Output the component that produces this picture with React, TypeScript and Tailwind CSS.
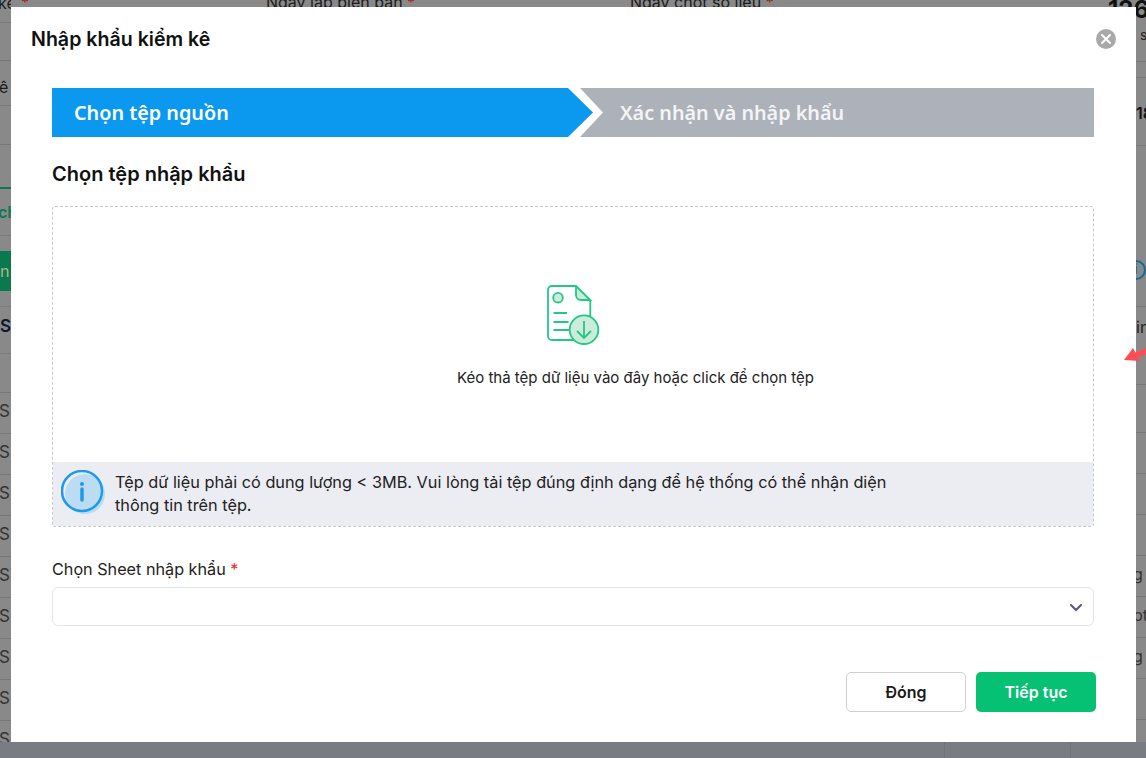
import React from "react";

const codeRows = ["SP", "SP", "SP", "SP", "ST", "SN", "SN", "SN", "SG"];
const rightRows = ["", "", "", "g", "pt", "g", "", ""];

const Backdrop: React.FC = () => (
  <div className="flex h-[742px] justify-between overflow-hidden text-[16px] text-[#1b1b1b]">
    <div className="flex w-[11px] flex-col overflow-hidden whitespace-nowrap">
      <div className="h-[23px] shrink-0 border-b border-[#777] leading-[6px] -ml-[2px]">ke</div>
      <div className="h-[38px] shrink-0 border-b border-[#777]" />
      <div className="flex h-[45px] shrink-0 items-center border-b border-[#777] pt-[8px] -ml-[1px]">ê</div>
      <div className="h-[39px] shrink-0 border-b border-[#777]" />
      <div className="h-[44px] shrink-0 border-b-2 border-[#0a7a4e]" />
      <div className="flex h-[47px] shrink-0 items-center border-b border-[#7c7c7c] font-semibold text-[#0a7a4e]">
        <span className="-ml-[2px]">ch</span>
      </div>
      <div className="h-[15px] shrink-0" />
      <div className="flex h-[40px] shrink-0 items-center bg-[#0a7a4e] text-[#b9b38a]">n</div>
      <div className="h-[16px] shrink-0 border-b border-[#7c7c7c]" />
      <div className="flex h-[47px] shrink-0 items-center border-b border-[#7c7c7c] pb-[6px] text-[17px] font-semibold text-[#0d1830]">
        Se
      </div>
      <div className="h-[39px] shrink-0 border-b border-[#777]" />
      {codeRows.map((code, i) => (
        <div key={i} className="flex h-[41px] shrink-0 items-center border-b border-[#777] pb-[3px] text-[17px] text-[#333] -ml-[1px]">
          {code}
        </div>
      ))}
    </div>
    <div className="flex w-[10px] flex-col overflow-hidden whitespace-nowrap">
      <div className="flex h-[62px] shrink-0 items-center border-b border-[#777] pt-[8px] text-[14px] text-[#222] pl-[4px]">s</div>
      <div className="h-[16px] shrink-0 border-b border-[#777]" />
      <div className="flex h-[68px] shrink-0 items-center border-b border-[#777] pt-[2px] font-semibold text-[#111]">18</div>
      <div className="flex h-[161px] shrink-0 items-center border-b border-[#777] pt-[88px]">
        <div className="flex h-[20px] w-[20px] shrink-0 -ml-[10px] items-center justify-center rounded-full border-2 border-[#13689c] text-[13px] text-[#13689c]">
          i
        </div>
      </div>
      <div className="flex h-[78px] shrink-0 items-center border-b border-[#777] pb-[38px] text-[#222]">in</div>
      <div className="h-[48px] shrink-0 border-b border-[#777]" />
      {rightRows.map((text, i) => (
        <div key={i} className="flex h-[41px] shrink-0 items-center border-b border-[#777] pb-[5px] text-[#333] -ml-[3px]">
          {text}
        </div>
      ))}
    </div>
  </div>
);

const FileIcon: React.FC = () => (
  <svg width="54" height="60" viewBox="0 0 54 60" fill="none" stroke="#22c983" strokeWidth="1.800">
    <path d="M29 1H5a4 4 0 0 0-4 4v46a4 4 0 0 0 4 4h25" />
    <path d="M43.300 15v16" />
    <path d="M29 1l14.300 14H34a5 5 0 0 1-5-5z" fill="#cdebdb" />
    <circle cx="11" cy="12.700" r="4.800" fill="#cdebdb" />
    <path d="M6.500 28h13.500M6.500 37h15M6.500 45h17" />
    <circle cx="37" cy="44.700" r="14.300" fill="#cdebdb" />
    <path d="M37 36v17M30 46l7 7 7-7" />
  </svg>
);

const InfoIcon: React.FC = () => (
  <svg width="48" height="48" viewBox="0 0 48 48" fill="none">
    <circle cx="24" cy="24" r="20" fill="#bcdcf3" />
    <circle cx="21" cy="21" r="20" stroke="#1b9bea" strokeWidth="2.500" />
    <circle cx="21" cy="14" r="2" fill="#1b9bea" />
    <path d="M21 19v11" stroke="#1b9bea" strokeWidth="3.500" strokeLinecap="round" />
  </svg>
);

export default function App() {
  return (
    <div className="relative h-[758px] w-[1146px] overflow-hidden bg-[#898989] font-['Inter',sans-serif]">
      <Backdrop />
      <div className="flex h-[16px] bg-[#797c83]">
        <div className="h-full w-[945px] border-r border-[#6f7279]" />
        <div className="h-full w-[126px] border-r border-[#6f7279]" />
      </div>

      {/* top row of the page behind the dialog */}
      <div className="absolute top-[-7px] left-[266px] text-[16px] leading-[18px] whitespace-nowrap text-[#1b1b1b]">
        Ngày lập biên bản <span className="text-[#a11]">*</span>
      </div>
      <div className="absolute top-[-7px] left-[630px] text-[16px] leading-[18px] whitespace-nowrap text-[#1b1b1b]">
        Ngày chốt số liệu <span className="text-[#a11]">*</span>
      </div>
      <div className="absolute top-[-7px] left-[21px] text-[16px] leading-[18px] text-[#a11]">*</div>
      <div className="absolute top-[-4px] left-[1108px] text-[24px] leading-[28px] font-bold whitespace-nowrap text-[#111]">126</div>

      <div className="absolute top-[7px] left-[11px] flex h-[735px] w-[1125px] flex-col bg-white">
        <div className="flex items-center justify-between pt-[20px] pr-[20px] pl-[20px]">
          <h2 className="text-[19.6px] leading-[24px] font-semibold text-[#111]">Nhập khẩu kiểm kê</h2>
          <button className="flex h-[20px] w-[20px] items-center justify-center rounded-full bg-[#a9a9a9]">
            <svg width="12" height="12" viewBox="0 0 12 12" stroke="#fff" strokeWidth="2" strokeLinecap="round">
              <path d="M2 2l8 8M10 2l-8 8" />
            </svg>
          </button>
        </div>

        <div className="mt-[37px] ml-[41px] flex h-[49px] w-[1042px] bg-[#adb1b9] font-['Noto_Sans',sans-serif] text-[19.800px] font-semibold text-white">
          <div className="h-full w-[551px] bg-white [clip-path:polygon(0_0,528px_0,551px_50%,528px_100%,0_100%)]">
            <div className="flex h-full w-[541px] items-center bg-[#0a99ee] pl-[22px] [clip-path:polygon(0_0,516px_0,541px_50%,516px_100%,0_100%)]">
              Chọn tệp nguồn
            </div>
          </div>
          <div className="flex items-center pl-[17px] text-[#f3f4f6]">Xác nhận và nhập khẩu</div>
        </div>

        <div className="ml-[41px] mr-[42px] flex flex-1 flex-col">
          <h3 className="mt-[25px] text-[20px] leading-[24px] font-semibold text-[#111]">Chọn tệp nhập khẩu</h3>

          <div className="mt-[20px] flex h-[321px] flex-col rounded-[3px] border border-dashed border-[#c9c9c9]">
            <div className="flex flex-1 flex-col items-center pt-[78px]">
              <div className="ml-[2px]">
                <FileIcon />
              </div>
              <p className="mt-[22px] ml-[125px] text-[15px] leading-[22px] text-[#222]">
                Kéo thả tệp dữ liệu vào đây hoặc click để chọn tệp
              </p>
            </div>
            <div className="flex h-[64px] items-center gap-[6px] bg-[#ecedf2] pl-[8px]">
              <InfoIcon />
              <p className="w-[790px] text-[16.300px] leading-[23px] text-[#222]">
                Tệp dữ liệu phải có dung lượng &lt; 3MB. Vui lòng tải tệp đúng định dạng để hệ thống có thể nhận diện thông tin trên tệp.
              </p>
            </div>
          </div>

          <label className="mt-[31px] text-[16.200px] leading-[22px] text-[#222]">
            Chọn Sheet nhập khẩu <span className="text-[#e5322d]">*</span>
          </label>
          <div className="mt-[7px] flex h-[39px] items-center justify-end rounded-[6px] border border-[#e3e4e8] pr-[10px]">
            <svg width="14" height="14" viewBox="0 0 14 14" fill="none" stroke="#565a6e" strokeWidth="2" strokeLinecap="round">
              <path d="M2 5l5 5 5-5" />
            </svg>
          </div>

          <div className="-mr-[2px] mt-[46px] flex justify-end gap-[10px]">
            <button className="h-[40px] w-[120px] rounded-[5px] border border-[#cfcfd2] bg-white text-[16px] font-semibold text-[#1a1a1a]">
              Đóng
            </button>
            <button className="h-[40px] w-[120px] rounded-[5px] bg-[#06c073] text-[16px] font-semibold text-white">
              Tiếp tục
            </button>
          </div>
        </div>
      </div>

      {/* red annotation arrow drawn over the screenshot */}
      <svg className="absolute top-[345px] left-[1122px]" width="24" height="20" viewBox="0 0 24 20" fill="#ff4d57">
        <path d="M2 15L11 3l2.500 4.500L24 3v6.500L16.500 12l1 4z" />
      </svg>
    </div>
  );
}
